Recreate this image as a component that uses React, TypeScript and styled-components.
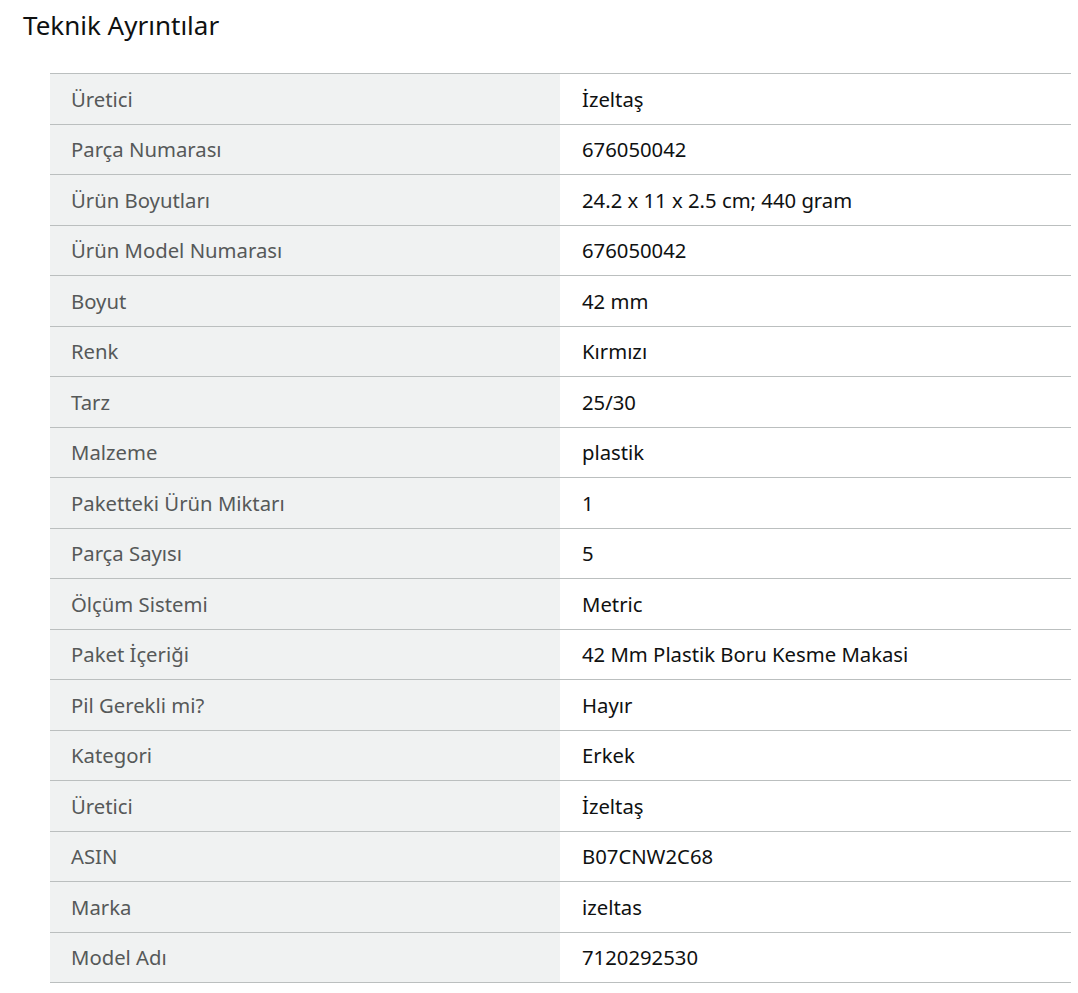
import React from "react";
import styled, { createGlobalStyle } from "styled-components";

const Global = createGlobalStyle`
  html, body { margin: 0; padding: 0; background: #fff; }
  body { font-family: "Noto Sans", "Open Sans", sans-serif; }
`;

const Page = styled.div`
  padding: 8px 7px 0 23px;
`;

const Title = styled.h2`
  margin: 0;
  font-family: "Noto Sans", sans-serif;
  font-weight: 400;
  font-size: 26px;
  line-height: 34px;
  color: #0f1111;
`;

const Table = styled.div`
  margin: 31px 0 0 27px;
  display: grid;
  grid-template-columns: 510px 1fr;
  border-top: 1px solid #bbbfbf;
`;

const Cell = styled.div<{ $label?: boolean }>`
  height: 49.5px;
  display: flex;
  align-items: center;
  padding: 0 21px 0 ${(p) => (p.$label ? "21px" : "22px")};
  border-bottom: 1px solid #bbbfbf;
  background: ${(p) => (p.$label ? "#f0f2f2" : "#fff")};
  color: ${(p) => (p.$label ? "#565959" : "#0f1111")};
  font-size: 20.3px;
  white-space: nowrap;
`;

const rows: [string, string][] = [
  ["Üretici", "İzeltaş"],
  ["Parça Numarası", "676050042"],
  ["Ürün Boyutları", "24.2 x 11 x 2.5 cm; 440 gram"],
  ["Ürün Model Numarası", "676050042"],
  ["Boyut", "42 mm"],
  ["Renk", "Kırmızı"],
  ["Tarz", "25/30"],
  ["Malzeme", "plastik"],
  ["Paketteki Ürün Miktarı", "1"],
  ["Parça Sayısı", "5"],
  ["Ölçüm Sistemi", "Metric"],
  ["Paket İçeriği", "42 Mm Plastik Boru Kesme Makasi"],
  ["Pil Gerekli mi?", "Hayır"],
  ["Kategori", "Erkek"],
  ["Üretici", "İzeltaş"],
  ["ASIN", "B07CNW2C68"],
  ["Marka", "izeltas"],
  ["Model Adı", "7120292530"],
];

export default function App() {
  return (
    <Page>
      <Global />
      <Title>Teknik Ayrıntılar</Title>
      <Table>
        {rows.map(([k, v], i) => (
          <React.Fragment key={i}>
            <Cell $label>{k}</Cell>
            <Cell>{v}</Cell>
          </React.Fragment>
        ))}
      </Table>
    </Page>
  );
}
